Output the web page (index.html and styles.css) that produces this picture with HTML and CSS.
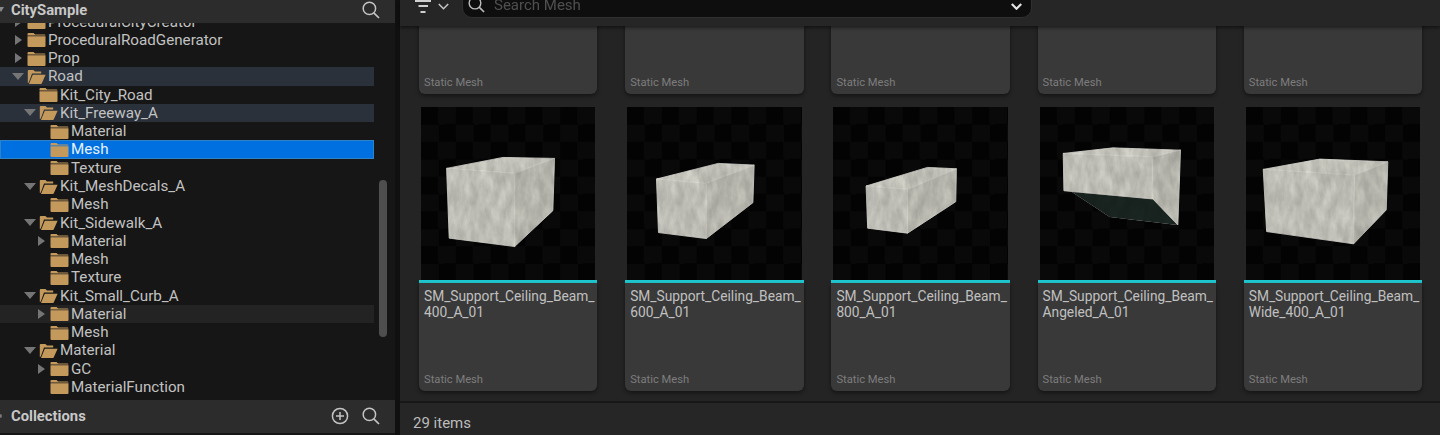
FILE: index.html
```html
<!DOCTYPE html>
<html lang="en">
<head>
<meta charset="utf-8">
<title>Content Browser</title>
<link rel="stylesheet" href="styles.css">
</head>
<body>
<svg class="defs" aria-hidden="true">
  <defs>
    <filter id="concrete" color-interpolation-filters="sRGB">
      <feTurbulence type="fractalNoise" baseFrequency="0.12 0.05" numOctaves="5" seed="7" result="noise"/>
      <feColorMatrix in="noise" type="matrix" values=".28 0 0 0 .78  .28 0 0 0 .78  .28 0 0 0 .77  0 0 0 0 1" result="grey"/>
      <feBlend in="SourceGraphic" in2="grey" mode="multiply" result="mix"/>
      <feComposite in="mix" in2="SourceAlpha" operator="in" result="tex"/>
      <feGaussianBlur in="tex" stdDeviation=".3"/>
    </filter>
    <symbol id="folder" viewBox="0 0 19 15">
      <path class="f" d="M.5 2a1 1 0 0 1 1-1h5l1.600 1.600h9.400a1 1 0 0 1 1 .9H.5z"/>
      <path class="f" d="M.5 4.200h18V14a1 1 0 0 1-1 1h-16a1 1 0 0 1-1-1z"/>
    </symbol>
    <symbol id="folder-open" viewBox="0 0 19 15">
      <path class="f" d="M.8 14V2a1 1 0 0 1 1-1h4.600l1.600 1.600h6.200v1.800H5L1.800 13.600z"/>
      <path class="f" d="M5.800 5.800h12.800l-3.900 8.700a.8.8 0 0 1-.7.5H2z"/>
    </symbol>
    <symbol id="search" viewBox="0 0 18 18">
      <circle cx="7.400" cy="7.400" r="6.200" fill="none" stroke="currentColor" stroke-width="1.500"/>
      <path d="M11.800 11.800l5.200 5.200" fill="none" stroke="currentColor" stroke-width="1.700"/>
    </symbol>
  </defs>
</svg>
<div class="app">
  <aside class="left">
    <header class="panel-head">
      <span class="tri-down"></span>
      <span class="head-title">CitySample</span>
      <svg class="ico-search"><use href="#search"/></svg>
    </header>
    <div class="tree-wrap">
      <div class="tree">
        <div class="row d0"><span class="arrow r"></span><svg class="fld"><use href="#folder"/></svg><span>ProceduralCityCreator</span></div>
        <div class="row d0"><span class="arrow r"></span><svg class="fld"><use href="#folder"/></svg><span>ProceduralRoadGenerator</span></div>
        <div class="row d0"><span class="arrow r"></span><svg class="fld"><use href="#folder"/></svg><span>Prop</span></div>
        <div class="row d0 hl"><span class="arrow o"></span><svg class="fld"><use href="#folder-open"/></svg><span>Road</span></div>
        <div class="row d1"><span class="arrow"></span><svg class="fld"><use href="#folder"/></svg><span>Kit_City_Road</span></div>
        <div class="row d1 hl"><span class="arrow o"></span><svg class="fld"><use href="#folder-open"/></svg><span>Kit_Freeway_A</span></div>
        <div class="row d2"><span class="arrow"></span><svg class="fld"><use href="#folder"/></svg><span>Material</span></div>
        <div class="row d2 sel"><span class="arrow"></span><svg class="fld"><use href="#folder"/></svg><span>Mesh</span></div>
        <div class="row d2"><span class="arrow"></span><svg class="fld"><use href="#folder"/></svg><span>Texture</span></div>
        <div class="row d1"><span class="arrow o"></span><svg class="fld"><use href="#folder-open"/></svg><span>Kit_MeshDecals_A</span></div>
        <div class="row d2"><span class="arrow"></span><svg class="fld"><use href="#folder"/></svg><span>Mesh</span></div>
        <div class="row d1"><span class="arrow o"></span><svg class="fld"><use href="#folder-open"/></svg><span>Kit_Sidewalk_A</span></div>
        <div class="row d2"><span class="arrow r"></span><svg class="fld"><use href="#folder"/></svg><span>Material</span></div>
        <div class="row d2"><span class="arrow"></span><svg class="fld"><use href="#folder"/></svg><span>Mesh</span></div>
        <div class="row d2"><span class="arrow"></span><svg class="fld"><use href="#folder"/></svg><span>Texture</span></div>
        <div class="row d1"><span class="arrow o"></span><svg class="fld"><use href="#folder-open"/></svg><span>Kit_Small_Curb_A</span></div>
        <div class="row d2 hover"><span class="arrow r"></span><svg class="fld"><use href="#folder"/></svg><span>Material</span></div>
        <div class="row d2"><span class="arrow"></span><svg class="fld"><use href="#folder"/></svg><span>Mesh</span></div>
        <div class="row d1"><span class="arrow o"></span><svg class="fld"><use href="#folder-open"/></svg><span>Material</span></div>
        <div class="row d2"><span class="arrow r"></span><svg class="fld"><use href="#folder"/></svg><span>GC</span></div>
        <div class="row d2"><span class="arrow"></span><svg class="fld"><use href="#folder"/></svg><span>MaterialFunction</span></div>
      </div>
      <div class="scroll"><div class="thumb-bar"></div></div>
    </div>
    <footer class="panel-head coll">
      <span class="tri-right"></span>
      <span class="head-title">Collections</span>
      <svg class="ico-plus" viewBox="0 0 18 18"><circle cx="9" cy="9" r="7.600" fill="none" stroke="currentColor" stroke-width="1.500"/><path d="M9 5v8M5 9h8" fill="none" stroke="currentColor" stroke-width="1.500"/></svg>
      <svg class="ico-search"><use href="#search"/></svg>
    </footer>
  </aside>
  <main class="right">
    <div class="toolbar">
      <svg class="ico-filter" viewBox="0 0 16 14"><path d="M0 1h16M3.500 6h9.500M5.500 12h5" fill="none" stroke="currentColor" stroke-width="2"/></svg>
      <svg class="ico-chev" viewBox="0 0 11 7"><path d="M.8 1l4.700 4.700L10.200 1" fill="none" stroke="currentColor" stroke-width="1.500"/></svg>
      <div class="searchbox">
        <svg class="ico-search"><use href="#search"/></svg>
        <span class="placeholder">Search Mesh</span>
        <svg class="ico-chev bold" viewBox="0 0 11 7"><path d="M.8 1l4.700 4.700L10.200 1" fill="none" stroke="currentColor" stroke-width="2.200"/></svg>
      </div>
    </div>
    <div class="content">
      <div class="grid">
        <article class="card"><div class="info"><p class="type">Static Mesh</p></div></article>
        <article class="card"><div class="info"><p class="type">Static Mesh</p></div></article>
        <article class="card"><div class="info"><p class="type">Static Mesh</p></div></article>
        <article class="card"><div class="info"><p class="type">Static Mesh</p></div></article>
        <article class="card"><div class="info"><p class="type">Static Mesh</p></div></article>

        <article class="card">
          <div class="thumb"><svg class="mesh" viewBox="0 0 175 173"><g filter="url(#concrete)">
            <polygon class="top" points="25.700,61.300 82.300,50.300 134,51.300 94,66.300"/>
            <polygon class="front" points="25.700,61.300 94,66.300 94,139.700 28.300,131.300"/>
            <polygon class="side" points="94,66.300 134,51.300 132.300,103.700 94,139.700"/>
          </g></svg></div>
          <div class="info"><p class="name">SM_Support_Ceiling_Beam_<br>400_A_01</p><p class="type">Static Mesh</p></div>
        </article>
        <article class="card">
          <div class="thumb"><svg class="mesh" viewBox="0 0 175 173"><g filter="url(#concrete)">
            <polygon class="top" points="29.600,72 91.600,56.300 127.600,58 79.600,76.300"/>
            <polygon class="front" points="29.600,72 79.600,76.300 79.600,131.700 31.600,125.700"/>
            <polygon class="side" points="79.600,76.300 127.600,58 126.300,95.700 79.600,131.700"/>
          </g></svg></div>
          <div class="info"><p class="name">SM_Support_Ceiling_Beam_<br>600_A_01</p><p class="type">Static Mesh</p></div>
        </article>
        <article class="card">
          <div class="thumb"><svg class="mesh" viewBox="0 0 175 173"><g filter="url(#concrete)">
            <polygon class="top" points="33.200,79 94.800,60.300 123.800,61.700 74.800,82.300"/>
            <polygon class="front" points="33.200,79 74.800,82.300 74.800,126.300 34.800,121.300"/>
            <polygon class="side" points="74.800,82.300 123.800,61.700 123.200,94.700 74.800,126.300"/>
          </g></svg></div>
          <div class="info"><p class="name">SM_Support_Ceiling_Beam_<br>800_A_01</p><p class="type">Static Mesh</p></div>
        </article>
        <article class="card">
          <div class="thumb"><svg class="mesh" viewBox="0 0 175 173"><g filter="url(#concrete)">
            <polygon class="under" points="32,85 113.300,92 138,118 70,110"/>
            <polygon class="top" points="23.300,46.300 73.300,40.700 141,43 112.700,49.700"/>
            <polygon class="front" points="23.300,46.300 112.700,49.700 113.300,92 24,83.700"/>
            <polygon class="side" points="112.700,49.700 141,43 138.300,118 113.300,92"/>
          </g></svg></div>
          <div class="info"><p class="name">SM_Support_Ceiling_Beam_<br>Angeled_A_01</p><p class="type">Static Mesh</p></div>
        </article>
        <article class="card">
          <div class="thumb"><svg class="mesh" viewBox="0 0 175 173"><g filter="url(#concrete)">
            <polygon class="top" points="17.300,62.300 74,52 142.300,54.700 109,68"/>
            <polygon class="front" points="17.300,62.300 109,68 108,137 20.700,124.700"/>
            <polygon class="side" points="109,68 142.300,54.700 140.700,103 108,137"/>
          </g></svg></div>
          <div class="info"><p class="name">SM_Support_Ceiling_Beam_<br>Wide_400_A_01</p><p class="type">Static Mesh</p></div>
        </article>
      </div>
    </div>
    <footer class="status">29 items</footer>
  </main>
</div>
</body>
</html>
```
FILE: styles.css
```css
* { box-sizing: border-box; }
html, body { margin: 0; height: 100%; }
body {
  background: #101010;
  font-family: Roboto, "Liberation Sans", sans-serif;
  color: #c4c4c4;
  overflow: hidden;
}
.defs { display: block; width: 0; height: 0; }
.app { display: flex; height: 435px; filter: blur(.35px); }

/* left panel */
.left { width: 395px; flex: none; display: flex; flex-direction: column; background: #161616; }
.panel-head {
  height: 23px; flex: none; display: flex; align-items: center;
  background: #2c2c2c; padding-right: 15px; padding-bottom: 4px;
  position: relative; z-index: 1;
}
.panel-head.coll { height: 33px; margin-bottom: 2px; padding-bottom: 1px; }
.head-title { font-size: 14.800px; font-weight: 700; color: #c8c8c8; margin-left: 7px; margin-right: auto; }
.tri-down { width: 0; height: 0; border: 3px solid transparent; border-top: 5px solid #8a8a8a; border-bottom: 0; margin-left: -2px; }
.tri-right { width: 4px; height: 4px; background: #777; border-radius: 50%; margin-left: -2px; margin-right: 2px; }
.ico-search { width: 18px; height: 18px; color: #c4c4c4; flex: none; }
.panel-head .ico-search { margin-left: 13px; }
.ico-plus { width: 18px; height: 18px; color: #c4c4c4; flex: none; }

.tree-wrap { flex: 1; min-height: 0; overflow: hidden; display: flex; }
.tree { width: 374px; flex: none; margin-top: -10.500px; }
.row { height: 18.270px; display: flex; align-items: center; font-size: 15.200px; white-space: nowrap; color: #c2c2c2; }
.d0 { padding-left: 13px; }
.d1 { padding-left: 25px; }
.d2 { padding-left: 36px; }
.hl { background: #2a313b; }
.hover { background: #232323; }
.sel { background: #006fe0; box-shadow: inset 0 0 0 1px #2d82c8; color: #e6f2ff; }
.arrow { width: 10px; flex: none; height: 10px; display: flex; align-items: center; justify-content: center; }
.arrow.r::before { content: ""; border-left: 7px solid #757575; border-top: 5.500px solid transparent; border-bottom: 5.500px solid transparent; }
.arrow.o::before { content: ""; border-top: 7px solid #757575; border-left: 6px solid transparent; border-right: 6px solid transparent; }
.fld { width: 19px; height: 15px; flex: none; margin: 0 2px 0 4px; }
.f { fill: #c49a5c; }

.scroll { flex: 1; padding: 157px 8px 0 5px; }
.thumb-bar { height: 157px; background: #4e4e4e; border-radius: 4px; }

/* right panel */
.right { flex: 1; min-width: 0; margin-left: 5px; display: flex; flex-direction: column; background: #242424; }
.toolbar {
  height: 26px; flex: none; display: flex; align-items: flex-start;
  background: #262626; padding-left: 15px;
  box-shadow: 0 2px 3px rgba(0,0,0,.45); position: relative; z-index: 1;
}
.ico-filter { width: 16px; height: 14px; color: #d0d0d0; flex: none; }
.ico-chev { width: 11px; height: 7px; color: #c8c8c8; flex: none; margin: 3px 0 0 7px; }
.searchbox {
  width: 570px; height: 27px; margin: -9px 0 0 13px; flex: none;
  display: flex; align-items: center; padding: 0 9px 0 5px;
  background: #0e0e0e; border: 1px solid #303030; border-radius: 10px;
}
.searchbox .ico-search { width: 17px; height: 17px; color: #bcbcbc; }
.placeholder { margin-left: 9px; font-size: 15px; color: #4f4f4f; margin-right: auto; }
.ico-chev.bold { color: #e4e4e4; margin: 4px 0 0; }

.content { flex: 1; min-height: 0; overflow: hidden; padding-left: 19px; }
.grid {
  display: grid; grid-template-columns: repeat(5, 178.400px);
  column-gap: 27.800px; row-gap: 13px; margin-top: -216px;
}
.card { height: 284px; display: flex; flex-direction: column; justify-content: flex-end; }
.thumb { height: 176px; flex: none; padding: 0 2px; border-bottom: 3px solid #1fc8d0; }
.mesh {
  display: block; width: 100%; height: 173px;
  background: repeating-conic-gradient(#090909 0 25%, #030303 0 50%) 0 0 / 34.800px 34.800px;
}
.top { fill: #d2d1ca; stroke: #e2e1dc; stroke-width: .8; }
.front { fill: #cdccc6; stroke: #dfded8; stroke-width: .8; }
.side { fill: #c3c2bb; stroke: #dad9d3; stroke-width: .8; }
.under { fill: #1a2622; }
.info {
  height: 108px; flex: none; display: flex; flex-direction: column;
  background: #393939; border-radius: 0 0 6px 6px; padding: 5px 3px 4px 5px;
  box-shadow: 0 2px 4px rgba(0,0,0,.45);
}
.name { margin: 0; font-size: 13.750px; line-height: 16px; color: #c0c0c0; white-space: nowrap; }
.type { margin: auto 0 0; font-size: 11.200px; line-height: 14px; color: #7d7d7d; }

.status {
  height: 34px; flex: none; display: flex; align-items: center;
  padding: 8px 0 0 13px; font-size: 15px; color: #bcbcbc;
  background: #262626; border-top: 2px solid #181818;
}
```
